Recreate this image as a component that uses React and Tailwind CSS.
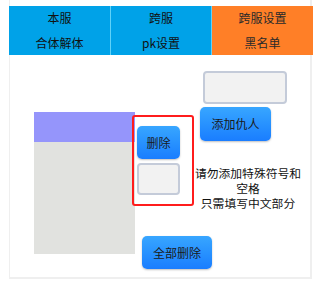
import React from "react";

const font = { fontFamily: '"Noto Sans CJK SC", "Noto Sans", sans-serif' };

function Btn({ children, className = "" }) {
  return (
    <div
      className={
        "flex shrink-0 items-center justify-center rounded-[5px] bg-gradient-to-b from-[#38a6ff] to-[#1a7dff] text-[12px] text-[#1a1a1a] shadow-[0_1px_2px_rgba(0,0,0,0.25)] " +
        className
      }
    >
      {children}
    </div>
  );
}

function Input({ className = "" }) {
  return (
    <div
      className={
        "shrink-0 rounded-[4px] border-2 border-[#c4cbd9] bg-[#f2f2f2] " + className
      }
    />
  );
}

export default function App() {
  return (
    <div style={font} className="h-[282px] w-[320px] bg-white">
      <div className="ml-[9px] h-[279px] w-[303px] border-b-2 border-l border-r-2 border-[#efefef] pt-[6px]">
        {/* tabs */}
        <div className="-ml-px flex h-[49px] w-[304px] text-[12px] leading-[24.5px] text-[#111]">
          <div className="flex w-[101px] shrink-0 flex-col items-center bg-[#00a2e8]">
            <span>本服</span>
            <span>合体解体</span>
          </div>
          <div className="flex w-[101px] shrink-0 flex-col items-center border-l border-[#5fd2f8] bg-[#00a2e8]">
            <span>跨服</span>
            <span>pk设置</span>
          </div>
          <div className="flex w-[102px] shrink-0 flex-col items-center border-l border-[#5fd2f8] bg-[#ff7f27] text-[#2a2a2a]">
            <span>跨服设置</span>
            <span>黑名单</span>
          </div>
        </div>

        {/* content */}
        <div className="flex">
          <div className="ml-[24px] mt-[57px] flex h-[142px] w-[101px] shrink-0 flex-col bg-[#e1e2df]">
            <div className="h-[30px] bg-[#9595fb]" />
          </div>

          <div className="-ml-[3px] mt-[60px] flex w-[62px] shrink-0 flex-col">
            <div className="flex h-[91px] w-[62px] flex-col rounded-[3px] border-2 border-[#ff1c1c] pl-[3px] pt-[9px]">
              <Btn className="h-[33px] w-[43px]">删除</Btn>
              <Input className="mt-[4px] h-[32px] w-[43px]" />
            </div>
            <Btn className="ml-[10px] mt-[30px] h-[33px] w-[70px]">全部删除</Btn>
          </div>

          <div className="flex w-[108px] shrink-0 flex-col">
            <Input className="ml-[9px] mt-[16px] h-[33px] w-[84px]" />
            <Btn className="ml-[6px] mt-[3px] h-[34px] w-[71px]">添加仇人</Btn>
            <div className="mt-[24px] whitespace-nowrap text-center text-[11.8px] leading-[15px] text-[#111]">
              请勿添加特殊符号和
              <br />
              空格
              <br />
              只需填写中文部分
            </div>
          </div>
        </div>
      </div>
    </div>
  );
}
